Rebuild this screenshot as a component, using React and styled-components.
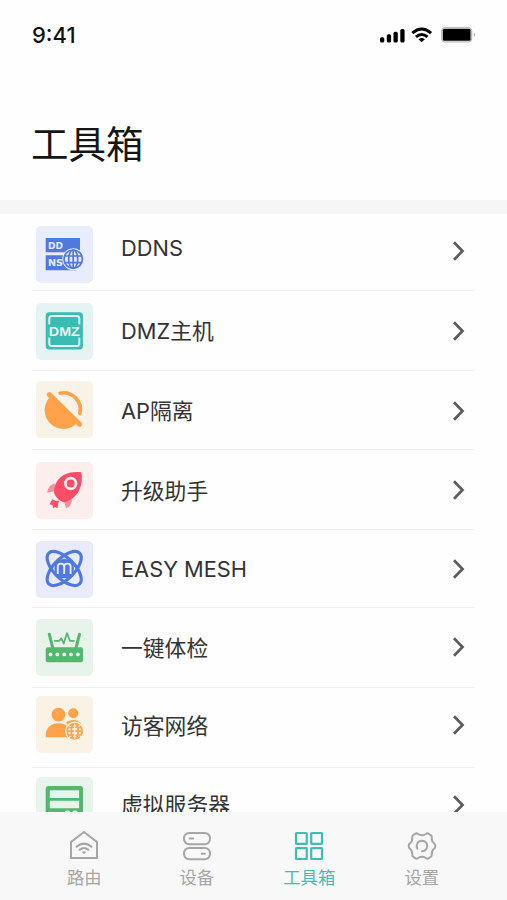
import React from "react";
import styled, { createGlobalStyle } from "styled-components";

const GlobalStyle = createGlobalStyle`
  * { box-sizing: border-box; }
  body { margin: 0; background: #fefefe; }
`;

const Screen = styled.div`
  width: 507px;
  height: 900px;
  display: flex;
  flex-direction: column;
  overflow: hidden;
  background: #fefefe;
  color: #333;
  font-family: Inter, "Noto Sans CJK SC", sans-serif;
`;

const StatusBar = styled.header`
  flex: none;
  height: 69px;
  padding: 0 30px 0 32px;
  display: flex;
  align-items: center;
  justify-content: space-between;
  color: #111;
`;

const Clock = styled.span`
  font-size: 22px;
  font-weight: 500;
  line-height: 26px;
`;

const StatusIcons = styled.div`
  display: flex;
  align-items: center;
  padding-top: 1px;
  svg { display: block; }
`;

const TitleBlock = styled.div`
  flex: none;
  height: 131px;
  padding: 48px 31px 0;
`;

const Title = styled.h1`
  margin: 0;
  font-size: 37.5px;
  font-weight: 400;
  line-height: 56px;
  color: #151515;
`;

const SectionGap = styled.div`
  flex: none;
  height: 14px;
  background: #f6f6f6;
`;

const List = styled.ul`
  flex: 1;
  min-height: 0;
  margin: 0;
  padding: 0 32px;
  overflow: hidden;
  list-style: none;
`;

const Row = styled.li`
  height: ${(p) => p.$height}px;
  display: grid;
  grid-template-columns: 57px 1fr 14px;
  column-gap: 28px;
  align-items: start;
  padding: 0 9px 0 4px;
  border-bottom: 1px solid #f1f1f1;
`;

const Tile = styled.div`
  width: 57px;
  height: 57px;
  margin-top: ${(p) => p.$top}px;
  border-radius: 5px;
  background: ${(p) => p.$bg};
  svg { display: block; }
`;

const Label = styled.span`
  margin-top: ${(p) => p.$top}px;
  font-size: 21.8px;
  line-height: 32px;
  white-space: nowrap;
`;

const Arrow = styled.svg`
  display: block;
  margin-top: ${(p) => p.$top}px;
`;

const TabBar = styled.nav`
  flex: none;
  height: 88px;
  padding: 19px 29px 0 28px;
  display: grid;
  grid-template-columns: repeat(4, 1fr);
  background: #f8f8f8;
`;

const Tab = styled.div`
  display: flex;
  flex-direction: column;
  align-items: center;
  color: ${(p) => (p.$active ? "#3fbdb5" : "#a6a6a6")};
  svg { display: block; }
`;

const TabLabel = styled.span`
  margin-top: 5px;
  font-size: 17.3px;
  line-height: 24px;
`;

const Art = ({ children }) => (
  <svg width="57" height="57" viewBox="0 0 57 57" fill="none">{children}</svg>
);

const DdnsArt = () => (
  <Art>
    <path d="M9.7 12H44v14.3H9.7zM9.7 29.3H40v15H9.7z" fill="#4f79df" />
    <g fill="#e9ecfa" fontFamily="DejaVu Sans" fontWeight="700" fontSize="9.3">
      <text x="12" y="23" textLength="15" lengthAdjust="spacingAndGlyphs">DD</text>
      <text x="12" y="40" textLength="15" lengthAdjust="spacingAndGlyphs">NS</text>
    </g>
    <circle cx="37.2" cy="33.2" r="11" fill="#e9ecfa" />
    <g stroke="#4f79df" strokeWidth="1.7">
      <circle cx="37.2" cy="33.2" r="9.2" />
      <ellipse cx="37.2" cy="33.2" rx="4.5" ry="9.2" />
      <path d="M37.2 24v18.4M28.5 30h17.4M28.5 36.7h17.4" />
    </g>
  </Art>
);

const DmzArt = () => (
  <Art>
    <rect x="9.7" y="9.3" width="37.2" height="37.2" rx="3.5" fill="#3bbcb2" />
    <path d="M13.3 21.5v-6q0-2.5 2.5-2.5h25q2.5 0 2.5 2.5v6M13.3 34.5v6q0 2.5 2.5 2.5h25q2.5 0 2.5-2.500V34.500" stroke="#e5f5f3" strokeWidth="2" />
    <text x="12.800" y="32.500" fill="#e5f5f3" fontFamily="Liberation Sans" fontWeight="700" fontSize="12.800" textLength="31" lengthAdjust="spacingAndGlyphs">DMZ</text>
  </Art>
);

const IsolationArt = () => (
  <Art>
    <path d="M13.300 13.600L43.600 43.200" stroke="#ffa24a" strokeWidth="5" strokeLinecap="round" />
    <path d="M14 16A18.500 18.500 0 0 0 40.800 42.300z" fill="#ffa24a" />
    <path d="M24 12.200A16.800 16.800 0 0 1 43.900 32.500" stroke="#ffa24a" strokeWidth="3.700" strokeLinecap="round" />
  </Art>
);

const RocketArt = () => (
  <Art>
    <path d="M18.800 21.500C14.300 22.500 11.700 26 11.300 30.800l7.500-1.800zM36 35.500C36.500 40.500 34.500 44.800 30 46.300l-2-7z" fill="#f98fa0" />
    <path d="M45.300 10.300C35 8.800 26.500 11.800 21.800 18.200C18.400 22.800 17.800 27.800 18.300 31.500C20 35.500 23.500 39.300 28.200 40.400C33 39 39 35.500 42.500 29.500C45.800 23.500 46.500 16.500 45.300 10.300z" fill="#fb4d67" />
    <path d="M16.500 38l3 1.500l2.800-.2l-.8 3l-.5 3.200l-2-1.800l-1.300 1.800l-.7-3l-2.600-.5z" fill="#fb4d67" stroke="#fb4d67" strokeWidth="1.200" strokeLinejoin="round" />
    <circle cx="34.700" cy="21.500" r="5.300" stroke="#fff0f0" strokeWidth="2.700" />
  </Art>
);

const MeshArt = () => (
  <Art>
    <circle cx="28.200" cy="27.500" r="9.800" fill="#5079de" />
    <g stroke="#5079de" strokeWidth="3.200">
      <ellipse cx="28.200" cy="27.500" rx="21.800" ry="10.300" transform="rotate(45 28.200 27.500)" />
      <ellipse cx="28.200" cy="27.500" rx="21.800" ry="10.300" transform="rotate(-45 28.200 27.500)" />
    </g>
    <path d="M21.800 33v-7.500q0-2.900 3.200-2.900t3.200 2.900V33M28.200 25.500q0-2.900 3.200-2.900t3.200 2.900V33" stroke="#e9ebfa" strokeWidth="1.900" />
  </Art>
);

const HealthArt = () => (
  <Art>
    <rect x="9.700" y="28.300" width="37.300" height="14.900" rx="2" fill="#55b76e" />
    <path d="M13.300 15.200l3.500 14M43.500 15.200l-3.500 14" stroke="#55b76e" strokeWidth="3" strokeLinecap="round" />
    <path d="M18.300 21.800h5l2-2.500l2.400 5.200l3.300-10.500l2.900 7.800h4.700" stroke="#55b76e" strokeWidth="1.700" strokeLinejoin="round" />
    <g fill="#e7f3eb">
      {[14.5, 21.3, 28.2, 35, 41.9].map((x) => <circle key={x} cx={x} cy="35.400" r="1.900" />)}
    </g>
  </Art>
);

const GuestArt = () => (
  <Art>
    <g fill="#ffa24a">
      <circle cx="22.500" cy="18.700" r="6.900" />
      <circle cx="37.300" cy="17.200" r="5" />
      <path d="M9.700 41.300v-2.500C10 32 15 27.300 22.500 27.300S35 32 35.300 38.800v2.500z" />
      <path d="M30 26.500C35 22.300 45 23 46.700 31.500L36 34z" />
    </g>
    <circle cx="38.700" cy="35.200" r="9.700" fill="#faf2e4" />
    <g stroke="#ffa24a" strokeWidth="1.700">
      <circle cx="38.700" cy="35.200" r="7.500" strokeDasharray="4.700 1.190" />
      <ellipse cx="38.700" cy="35.200" rx="3.500" ry="7.500" />
      <path d="M30.900 35.200h15.600M32.500 31.500h12.400M32.500 39h12.400" />
      <path d="M38.700 27.700v15" stroke="#faf2e4" strokeWidth="1.200" />
    </g>
  </Art>
);

const ServerArt = () => (
  <Art>
    <rect x="9.700" y="9" width="37.300" height="38" rx="3" fill="#55b76e" />
    <path d="M13.800 13.300h29.300v7.800H13.800zM13.800 23.700h29.300v7.500H13.800z" fill="#e7f3eb" />
    <circle cx="31.500" cy="36.800" r="3.200" fill="#e7f3eb" />
    <circle cx="39" cy="36.800" r="3.200" fill="#e7f3eb" />
  </Art>
);

const SignalIcon = () => (
  <svg width="25" height="16" viewBox="0 0 25 16" fill="#000">
    <rect y="10.300" width="4.300" height="5.300" rx="1.600" />
    <rect x="6.800" y="7.300" width="4.300" height="8.300" rx="1.600" />
    <rect x="13.500" y="4.800" width="4.300" height="10.800" rx="1.600" />
    <rect x="20.300" y="2" width="4.300" height="13.600" rx="1.600" />
  </svg>
);

const WifiIcon = () => (
  <svg width="22" height="16" viewBox="0 0 22 16" fill="none" stroke="#000" strokeWidth="2.900">
    <path d="M1.300 6.100Q10.700-2 20.100 6.100" />
    <path d="M4.900 9.800Q10.700 5 16.500 9.800" />
    <path d="M7.500 12.200Q10.700 9.800 13.900 12.200L10.700 15.300z" fill="#000" stroke="none" />
  </svg>
);

const BatteryIcon = () => (
  <svg width="36" height="16" viewBox="0 0 36 16" fill="none">
    <rect x=".700" y=".700" width="30" height="14.200" rx="3" stroke="#aaa" />
    <rect x="1.800" y="1.800" width="27.800" height="12" rx="1.500" fill="#000" />
    <path d="M32.800 5.500q2.800 2.300 0 4.600z" fill="#aaa" />
  </svg>
);

const WifiGap = styled.div`
  margin: 0 8px 0 6px;
`;

const NavIcon = ({ children }) => (
  <svg width="30" height="30" viewBox="0 0 30 30" fill="none" stroke="currentColor" strokeWidth="2" strokeLinejoin="round" strokeLinecap="round">{children}</svg>
);

const HomeTabIcon = () => (
  <NavIcon>
    <path d="M2 11L15 1l13 10v16H2z" />
    <path d="M7.500 15.800q7.500-6.300 15 0M10.500 18.800q4.500-3.700 9 0" />
    <path d="M12.700 20.900q2.300-1.500 4.600 0L15 23z" fill="currentColor" stroke="none" />
  </NavIcon>
);

const DeviceTabIcon = () => (
  <NavIcon>
    <rect x="2" y="2" width="26" height="11.300" rx="5.200" />
    <rect x="2" y="17" width="26" height="11.300" rx="5.200" />
    <path d="M7.700 7.600h3.500M19.700 22.700h3.200" />
  </NavIcon>
);

const ToolsTabIcon = () => (
  <NavIcon>
    <g strokeWidth="2.200">
      <rect x="2" y="2" width="10.800" height="10.800" rx=".500" />
      <rect x="17.200" y="2" width="10.800" height="10.800" rx=".500" />
      <rect x="2" y="17.200" width="10.800" height="10.800" rx=".500" />
      <rect x="17.200" y="17.200" width="10.800" height="10.800" rx=".500" />
    </g>
  </NavIcon>
);

const SettingsTabIcon = () => (
  <NavIcon>
    <path d="M8.200 2.800Q9.500 1.800 11 3Q15 5.600 19 3Q20.500 1.800 21.800 2.800L24 4.300Q25 5 24.700 6.500Q24.500 10.500 27.300 12.500Q28.300 13.300 28.300 15Q28.300 16.700 27.300 17.500Q24.500 19.500 24.700 23.500Q25 25 24 25.700L21.800 27.200Q20.500 28.200 19 27Q15 24.400 11 27Q9.500 28.200 8.200 27.200L6 25.700Q5 25 5.300 23.500Q5.500 19.500 2.700 17.500Q1.700 16.700 1.700 15Q1.700 13.300 2.700 12.500Q5.500 10.500 5.300 6.500Q5 5 6 4.300z" />
    <path d="M10.400 17.700A5.300 5.300 0 1 1 15 20.300" />
  </NavIcon>
);

const tools = [
  { label: "DDNS", art: DdnsArt, bg: "#e9ecfa", height: 77, tile: 12, text: 18, arrow: 27 },
  { label: "DMZ主机", art: DmzArt, bg: "#e5f3f2", height: 80, tile: 12, text: 24, arrow: 30 },
  { label: "AP隔离", art: IsolationArt, bg: "#f9f2e6", height: 79, tile: 10, text: 24, arrow: 30 },
  { label: "升级助手", art: RocketArt, bg: "#fdeeee", height: 80, tile: 12, text: 25, arrow: 30 },
  { label: "EASY MESH", art: MeshArt, bg: "#e9ebfa", height: 78, tile: 11, text: 23, arrow: 29 },
  { label: "一键体检", art: HealthArt, bg: "#e7f3eb", height: 80, tile: 11, text: 24, arrow: 29 },
  { label: "访客网络", art: GuestArt, bg: "#faf2e4", height: 80, tile: 8, text: 22, arrow: 27 },
  { label: "虚拟服务器", art: ServerArt, bg: "#e7f3eb", height: 80, tile: 9, text: 21, arrow: 27 },
];

const tabs = [
  { label: "路由", icon: HomeTabIcon },
  { label: "设备", icon: DeviceTabIcon },
  { label: "工具箱", icon: ToolsTabIcon, active: true },
  { label: "设置", icon: SettingsTabIcon },
];

export default function App() {
  return (
    <Screen>
      <GlobalStyle />
      <StatusBar>
        <Clock>9:41</Clock>
        <StatusIcons>
          <SignalIcon />
          <WifiGap><WifiIcon /></WifiGap>
          <BatteryIcon />
        </StatusIcons>
      </StatusBar>
      <TitleBlock><Title>工具箱</Title></TitleBlock>
      <SectionGap />
      <List>
        {tools.map(({ label, art: Picture, bg, height, tile, text, arrow }) => (
          <Row key={label} $height={height}>
            <Tile $bg={bg} $top={tile}><Picture /></Tile>
            <Label $top={text}>{label}</Label>
            <Arrow $top={arrow} width="14" height="20" viewBox="0 0 14 20" fill="none" stroke="#5c5c5c" strokeWidth="2.700">
              <path d="M2 1.300L10.500 10L2 18.700" />
            </Arrow>
          </Row>
        ))}
      </List>
      <TabBar>
        {tabs.map(({ label, icon: Icon, active }) => (
          <Tab key={label} $active={active}>
            <Icon />
            <TabLabel>{label}</TabLabel>
          </Tab>
        ))}
      </TabBar>
    </Screen>
  );
}
